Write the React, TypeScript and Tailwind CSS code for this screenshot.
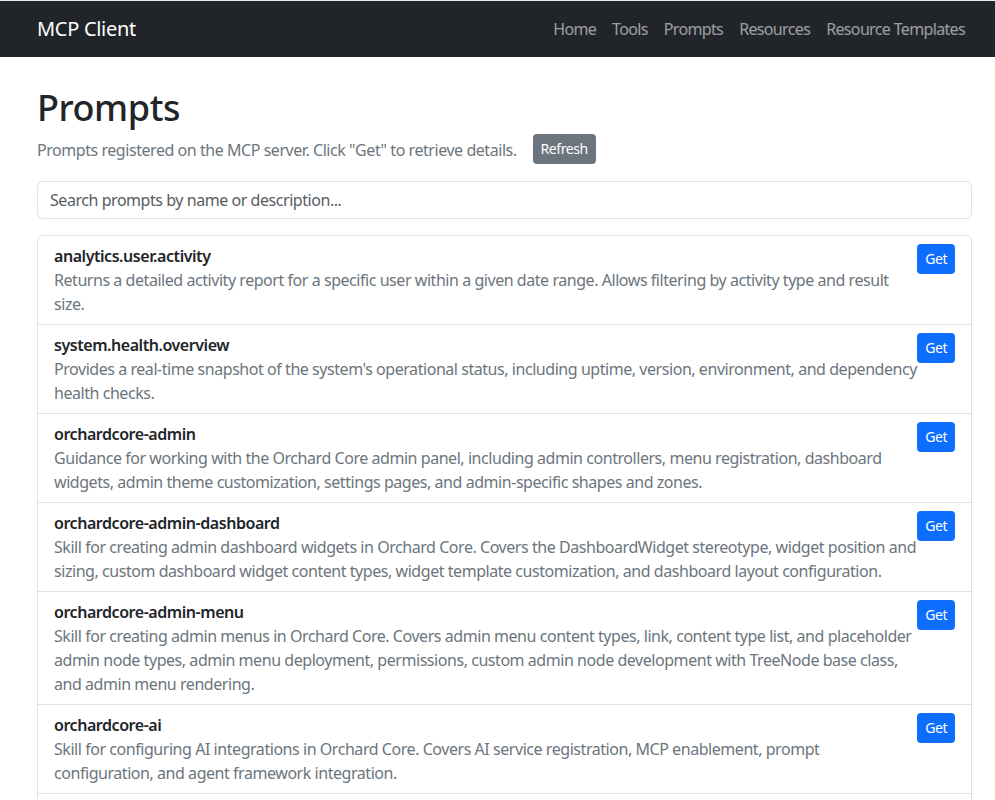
import React, { useState } from 'react';

type Prompt = { name: string; description: string };

const prompts: Prompt[] = [
  {
    name: 'analytics.user.activity',
    description:
      'Returns a detailed activity report for a specific user within a given date range. Allows filtering by activity type and result size.',
  },
  {
    name: 'system.health.overview',
    description:
      "Provides a real-time snapshot of the system's operational status, including uptime, version, environment, and dependency health checks.",
  },
  {
    name: 'orchardcore-admin',
    description:
      'Guidance for working with the Orchard Core admin panel, including admin controllers, menu registration, dashboard widgets, admin theme customization, settings pages, and admin-specific shapes and zones.',
  },
  {
    name: 'orchardcore-admin-dashboard',
    description:
      'Skill for creating admin dashboard widgets in Orchard Core. Covers the DashboardWidget stereotype, widget position and sizing, custom dashboard widget content types, widget template customization, and dashboard layout configuration.',
  },
  {
    name: 'orchardcore-admin-menu',
    description:
      'Skill for creating admin menus in Orchard Core. Covers admin menu content types, link, content type list, and placeholder admin node types, admin menu deployment, permissions, custom admin node development with TreeNode base class, and admin menu rendering.',
  },
  {
    name: 'orchardcore-ai',
    description:
      'Skill for configuring AI integrations in Orchard Core. Covers AI service registration, MCP enablement, prompt configuration, and agent framework integration.',
  },
  {
    name: 'orchardcore-ai-chat',
    description:
      'Skill for building AI chat experiences in Orchard Core, including chat widgets, session handling and profile configuration.',
  },
];

const navLinks = ['Home', 'Tools', 'Prompts', 'Resources', 'Resource Templates'];

const App: React.FC = () => {
  const [query, setQuery] = useState('');

  const filtered = prompts.filter(
    (p) =>
      p.name.toLowerCase().includes(query.toLowerCase()) ||
      p.description.toLowerCase().includes(query.toLowerCase())
  );

  return (
    <div className="min-h-screen bg-white text-[#212529] font-['Noto_Sans',sans-serif] text-[16px] leading-[24px] tracking-[-0.45px] border-t border-[#e9ecef]">
      <nav className="bg-[#212529] h-[56px] flex items-center justify-between pl-[37px] pr-[22px]">
        <a className="text-white text-[20px] leading-[30px] tracking-[-0.3px]">MCP Client</a>
        <ul className="flex">
          {navLinks.map((l) => (
            <li key={l}>
              <a className="block px-2 text-[16px] tracking-[-0.65px] text-white/55">{l}</a>
            </li>
          ))}
        </ul>
      </nav>

      <main className="pl-[37px] pr-[23px] pt-[28px]">
        <h1 className="text-[36px] leading-[46px] font-medium mb-[3px]">Prompts</h1>
        <div className="flex items-center mb-[17px]">
          <p className="text-[#6c757d] pt-px">
            Prompts registered on the MCP server. Click "Get" to retrieve details.
          </p>
          <button className="ml-4 h-[30px] px-2 rounded bg-[#6c757d] text-white text-[14px]">
            Refresh
          </button>
        </div>

        <input
          value={query}
          onChange={(e) => setQuery(e.target.value)}
          placeholder="Search prompts by name or description..."
          className="w-full h-[38px] px-3 border border-[#dee2e6] rounded-md outline-none placeholder:text-[#595c5f] text-[16px] mb-[16px]"
        />

        <ul className="border border-[#dee2e6] rounded-md">
          {filtered.map((p, i) => (
            <li
              key={p.name}
              className={`flex items-start justify-between px-4 py-2 ${i > 0 ? 'border-t border-[#dee2e6]' : ''}`}
            >
              <div>
                <div className="font-semibold">{p.name}</div>
                <div className="text-[#6c757d]">{p.description}</div>
              </div>
              <button className="shrink-0 h-[30px] px-2 rounded bg-[#0d6efd] text-white text-[14px]">
                Get
              </button>
            </li>
          ))}
        </ul>
      </main>
    </div>
  );
};

export default App;
